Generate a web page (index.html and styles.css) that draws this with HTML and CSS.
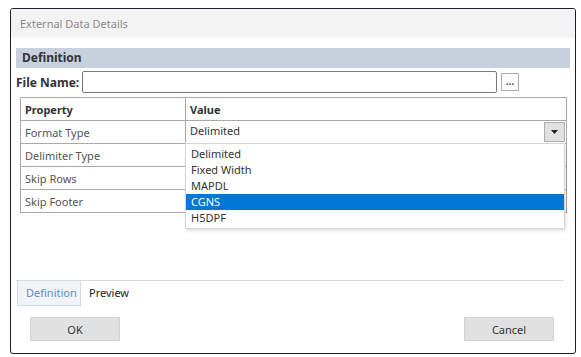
FILE: index.html
```html
<!DOCTYPE html>
<html lang="en">
<head>
    <meta charset="UTF-8" />
    <title>External Data Details</title>
    <link rel="stylesheet" href="styles.css">
</head>
<body>
    <div class="window">
        <div class="titlebar">External Data Details</div>
        <div class="content">
            <div class="section-head">Definition</div>
            <div class="file-row">
                <label for="fileName">File Name:</label>
                <input type="text" id="fileName" />
                <button class="browse" type="button">...</button>
            </div>
            <div class="grid-wrap">
                <table class="grid">
                    <thead>
                        <tr>
                            <th class="col-prop">Property</th>
                            <th>Value</th>
                        </tr>
                    </thead>
                    <tbody>
                        <tr>
                            <td>Format Type</td>
                            <td class="combo">
                                <span>Delimited</span>
                                <span class="combo-btn"><svg width="7" height="4" viewBox="0 0 7 4"><path d="M0 0h7L3.5 4z" fill="#222"/></svg></span>
                            </td>
                        </tr>
                        <tr><td>Delimiter Type</td><td></td></tr>
                        <tr><td>Skip Rows</td><td></td></tr>
                        <tr><td>Skip Footer</td><td></td></tr>
                    </tbody>
                </table>
                <ul class="dropdown">
                    <li>Delimited</li>
                    <li>Fixed Width</li>
                    <li>MAPDL</li>
                    <li class="selected">CGNS</li>
                    <li>H5DPF</li>
                </ul>
            </div>
            <div class="tabs">
                <div class="tab active">Definition</div>
                <div class="tab">Preview</div>
            </div>
            <div class="actions">
                <button type="button">OK</button>
                <button type="button">Cancel</button>
            </div>
        </div>
    </div>
</body>
</html>
```

FILE: styles.css
```css
body,
ul,
li {
  margin: 0;
  padding: 0;
}

* {
  box-sizing: border-box;
}

body {
  font-family: 'Noto Sans', sans-serif;
  font-size: 11px;
  color: #333;
  background-color: #fff;
}

.window {
  margin: 8px 0 0 10px;
  width: 566px;
  height: 346px;
  border: 1px solid #1d1d2b;
  border-radius: 3px;
  display: flex;
  flex-direction: column;
  overflow: hidden;
}

.titlebar {
  height: 29px;
  line-height: 29px;
  padding-left: 9px;
  background-color: #f3f3f3;
  color: #8a8a8a;
}

.content {
  flex: 1;
  display: flex;
  flex-direction: column;
  padding: 10px 5px 12px 5px;
}

.section-head {
  height: 20px;
  line-height: 20px;
  padding-left: 6px;
  background-color: #c7d1dd;
  font-weight: bold;
  font-size: 12px;
  color: #333;
}

.file-row {
  display: flex;
  align-items: center;
  gap: 3px;
  margin-top: 3px;
  padding-right: 51px;
}

.file-row label {
  font-weight: bold;
  font-size: 12px;
}

.file-row input {
  flex: 1;
  height: 22px;
  border: 1px solid #7a7a7a;
  border-radius: 2px;
}

.browse {
  width: 18px;
  height: 18px;
  margin-left: 1px;
  padding: 0;
  border: 1px solid #adadad;
  background-color: #fbfbfb;
  font-size: 10px;
  line-height: 10px;
  font-weight: bold;
  color: #555;
}

.grid-wrap {
  position: relative;
  flex: 1;
  margin: 4px 3px 0 4px;
}

.grid {
  width: 100%;
  border-collapse: collapse;
}

.grid th,
.grid td {
  height: 23px;
  padding: 0 4px;
  border: 1px solid #a9a9a9;
  text-align: left;
}

.grid th {
  font-weight: bold;
  color: #333;
}

.grid td {
  color: #555;
}

.col-prop {
  width: 165px;
}

.grid td.combo {
  position: relative;
  padding-bottom: 3px;
  color: #333;
}

.combo-btn {
  position: absolute;
  right: 1px;
  top: 1px;
  width: 21px;
  height: 20px;
  border: 1px solid #adadad;
  background-color: #e1e1e1;
  display: flex;
  align-items: center;
  justify-content: center;
}

.dropdown {
  position: absolute;
  left: 165px;
  top: 46px;
  width: 380px;
  padding: 2px 0;
  list-style: none;
  background-color: #fff;
  border: 1px solid #d6d6d6;
  box-shadow: 1px 2px 3px rgba(0, 0, 0, 0.12);
}

.dropdown li {
  height: 16px;
  line-height: 16px;
  padding-left: 5px;
  color: #333;
}

.dropdown li.selected {
  background-color: #0078d7;
  color: #fff;
}

.tabs {
  display: flex;
  border-top: 1px solid #d9d9d9;
  margin-right: 6px;
}

.tab {
  height: 25px;
  line-height: 24px;
  padding: 0 8px;
  color: #222;
}

.tab.active {
  margin-left: 1px;
  width: 64px;
  background-color: #f0f3f7;
  border: 1px solid #d3dae3;
  border-top: none;
  color: #6a8cbc;
}

.actions {
  display: flex;
  justify-content: space-between;
  margin-top: 11px;
  padding: 0 16px 0 14px;
}

.actions button {
  width: 90px;
  height: 24px;
  border: 1px solid #d2d2d2;
  background-color: #e1e1e1;
  font-family: 'Noto Sans', sans-serif;
  font-size: 11px;
  color: #333;
}
```
